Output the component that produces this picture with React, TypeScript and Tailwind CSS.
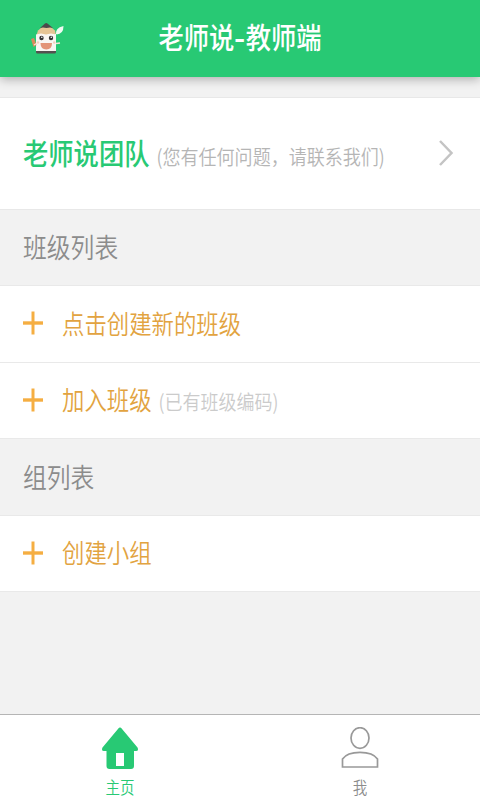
import { ReactNode } from "react";

const FONT = "font-['Noto_Sans_CJK_SC',sans-serif]";

function Mascot() {
  return (
    <svg width="36" height="34" viewBox="0 0 36 34" className="ml-7 mt-[22px] block">
      <path d="M8.500 13 10 8.500 16 3.500h5L27 8.500l1 4.500z" fill="#e6c596" />
      <path d="M12 6 17 1.500q1.200-.8 2.400 0L25 6 22 5.500 18.500 6 15 5.500z" fill="#4c4a4b" />
      <path d="M8 12.500 13 11.500 18 12.500 23 11.500 28 12.500V30H8z" fill="#f9f6f3" />
      <path d="M8 29h20v1q0 1.500-1.500 1.500h-17Q8 31.500 8 30z" fill="#54504f" />
      <circle cx="13.500" cy="16" r="2.200" fill="#333" />
      <circle cx="23" cy="16" r="2.200" fill="#333" />
      <circle cx="13.800" cy="15.200" r="0.800" fill="#fff" />
      <circle cx="23.300" cy="15.200" r="0.800" fill="#fff" />
      <path d="M12.500 21h11.500q0 6.500-5.700 6.500t-5.800-6.500z" fill="#e39478" />
      <circle cx="10" cy="20.500" r="1.200" fill="#f6cfc0" />
      <circle cx="26.200" cy="20.500" r="1.200" fill="#f6cfc0" />
      <path d="m3 17 3-1 2.500 7-3 2z" fill="#d98a5c" />
      <path d="m6 23 2.500-1.500M28 21.500l4-.5" stroke="#f4e4d6" strokeWidth="1.300" />
      <path d="M28.500 12.500q-2-6.500 7-8.500 0 8-7 8.500z" fill="#effaf2" />
      <path d="m26.500 13.500 3-3" stroke="#effaf2" />
    </svg>
  );
}

function PlusIcon() {
  return (
    <svg width="20" height="24" viewBox="0 0 20 24" className="block shrink-0">
      <path d="M10 .5v23" stroke="#f5ae42" strokeWidth="3" />
      <path d="M0 12h20" stroke="#f5ae42" strokeWidth="3.400" />
    </svg>
  );
}

function SectionTitle({ children }: { children: ReactNode }) {
  return (
    <div className="flex h-[76px] items-center border-b border-[#e9e9e9] bg-[#f2f2f2] pb-[4px] pl-[23px]">
      <h2 className="scale-y-[1.15] text-[23.800px] leading-none font-[350] text-[#8c8c8c]">{children}</h2>
    </div>
  );
}

function ActionRow({ label, hint }: { label: string; hint?: string }) {
  return (
    <div className="flex flex-1 items-center pb-px pl-[23px]">
      <PlusIcon />
      <span className="mb-px ml-[19px] scale-y-[1.15] text-[22.400px] leading-none font-[350] text-[#e2a340]">{label}</span>
      {hint && (
        <span className="mt-[3px] ml-[7px] scale-y-[1.15] text-[18px] leading-none font-[350] text-[#cbcbcb]">{hint}</span>
      )}
    </div>
  );
}

export default function App() {
  return (
    <div className={`flex h-[800px] w-[480px] flex-col overflow-hidden bg-[#f2f2f2] ${FONT}`}>
      <header className="relative flex h-[77px] shrink-0 justify-center bg-[#28c974] shadow-[0_2px_10px_rgba(0,0,0,0.3)]">
        <div className="absolute top-0 left-0">
          <Mascot />
        </div>
        <h1 className="mt-[26px] scale-y-[1.15] text-[25.300px] leading-none font-medium text-white">
          老师说<span className="mx-px inline-block scale-x-[1.2] font-bold">-</span>教师端
        </h1>
      </header>

      <main className="flex-1 pt-5">
        <div className="flex h-[113px] items-center border-y border-[#e8e8e8] bg-white pr-[26px] pb-[2px] pl-[23px]">
          <span className="scale-y-[1.15] text-[25.300px] leading-none font-medium text-[#28c974]">老师说团队</span>
          <span className="mt-[7px] ml-[7px] scale-y-[1.15] text-[18.050px] leading-none font-[350] whitespace-nowrap text-[#b5b5b5]">
            (您有任何问题，请联系我们)
          </span>
          <svg width="16" height="28" viewBox="0 0 16 28" className="ml-auto block">
            <path d="m2 2 11.500 12L2 26" fill="none" stroke="#c4c4c4" strokeWidth="2.500" />
          </svg>
        </div>
        <SectionTitle>班级列表</SectionTitle>
        <div className="flex h-[153px] flex-col divide-y divide-[#e9e9e9] border-b border-[#e9e9e9] bg-white">
          <ActionRow label="点击创建新的班级" />
          <ActionRow label="加入班级" hint="(已有班级编码)" />
        </div>
        <div className="pt-px">
          <SectionTitle>组列表</SectionTitle>
        </div>
        <div className="flex h-[76px] flex-col border-b border-[#e9e9e9] bg-white">
          <ActionRow label="创建小组" />
        </div>
      </main>

      <nav className="grid h-[86px] shrink-0 grid-cols-2 border-t border-[#b5b5b5] bg-white">
        <div className="flex flex-col items-center pt-3 text-[#28c974]">
          <svg width="38" height="42" viewBox="0 0 38 42" className="block">
            <path
              d="M18 .8Q19 0 20 .8L36.500 20.500Q38 24 35 24H33V39q0 3-3 3H8.500q-3 0-3-3V24H3Q0 24 1.500 20.500zM15 26V39h8V26z"
              fill="currentColor"
              fillRule="evenodd"
            />
          </svg>
          <span className="mt-[11px] scale-y-[1.15] text-[14.500px] leading-none font-[350]">主页</span>
        </div>
        <div className="flex flex-col items-center pt-3 text-[#8c8c8c]">
          <svg width="38" height="42" viewBox="0 0 38 42" className="block" fill="none" stroke="#999" strokeWidth="1.700">
            <ellipse cx="19" cy="11" rx="9" ry="10.300" />
            <path d="M1.500 40V32Q6 25.300 19 25.300T36.500 32V40z" />
          </svg>
          <span className="mt-[11px] scale-y-[1.15] text-[14.500px] leading-none font-[350]">我</span>
        </div>
      </nav>
    </div>
  );
}
